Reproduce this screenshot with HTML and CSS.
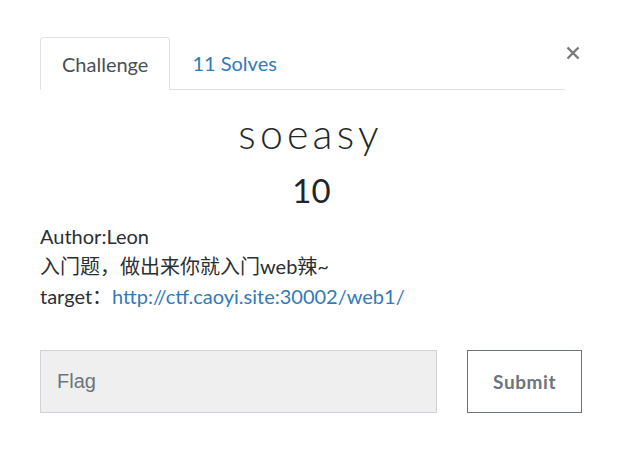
FILE: index.html
```html
<!DOCTYPE html>
<html>
<head>
<meta charset="utf-8">
<link rel="stylesheet" href="styles.css">
</head>
<body>
<div class="modal">
  <button class="close" aria-label="Close">
    <svg width="14" height="14" viewBox="0 0 14 14"><path d="M1.5 1.5 L12.5 12.5 M12.5 1.5 L1.5 12.5" stroke="#7a7a7a" stroke-width="2.4" stroke-linecap="butt"/></svg>
  </button>
  <div class="body">
    <ul class="tabs">
      <li class="tab active">Challenge</li>
      <li class="tab link">11 Solves</li>
    </ul>
    <h2 class="title">soeasy</h2>
    <h3 class="value">10</h3>
    <div class="desc">
      <p>Author:Leon</p>
      <p>入门题，做出来你就入门web辣~</p>
      <p>target：<a href="#">http://ctf.caoyi.site:30002/web1/</a></p>
    </div>
    <div class="form">
      <div class="input">Flag</div>
      <button class="submit">Submit</button>
    </div>
  </div>
</div>
</body>
</html>
```
FILE: styles.css
```css
html, body { margin: 0; padding: 0; background: #fff; }
body { font-family: Lato, "Noto Sans CJK SC", sans-serif; color: #212529; width: 622px; height: 470px; overflow: hidden; }
.modal { position: relative; width: 622px; height: 470px; }
.close { position: absolute; top: 46px; left: 566px; border: 0; background: none; padding: 0; width: 14px; height: 14px; display: flex; }
.body { padding: 37px 0 0 40px; width: 542px; }
.tabs { list-style: none; margin: 0 17px 0 0; padding: 0; display: flex; border-bottom: 1px solid #dee2e6; }
.tab { font-size: 20px; line-height: 24px; padding: 14px 21px 13px 21px; }
.tab.active { border: 1px solid #dee2e6; border-bottom-color: #fff; border-radius: 4px 4px 0 0; margin-bottom: -1px; color: #495057; }
.tab.link { color: #337ab7; padding-left: 22px; }
.title { margin: 20px 17px 0 0; text-align: center; font-weight: 300; font-size: 41px; line-height: 48px; letter-spacing: 4.2px; color: #212529; padding-left: 16px; }
.value { margin: 12px 17px 0 0; text-align: center; font-weight: 400; font-size: 33px; line-height: 40px; color: #212529; padding-left: 18px; }
.desc { margin-top: 11px; font-size: 20px; line-height: 30px; color: #2b2f33; }
.desc p { margin: 0; }
.desc a { color: #337ab7; text-decoration: none; }
.form { display: flex; margin-top: 39px; }
.input { width: 380px; height: 61px; background: #efefef; border: 1px solid #ced4da; font-family: "Liberation Sans", Arial, sans-serif; font-size: 20px; color: #6c757d; display: flex; align-items: center; padding-left: 16px; }
.submit { margin-left: 30px; width: 115px; height: 63px; background: #fff; border: 1px solid #6c757d; color: #6c757d; font-family: Lato, sans-serif; font-weight: 700; font-size: 19px; letter-spacing: 0.6px; padding: 0; }
```
